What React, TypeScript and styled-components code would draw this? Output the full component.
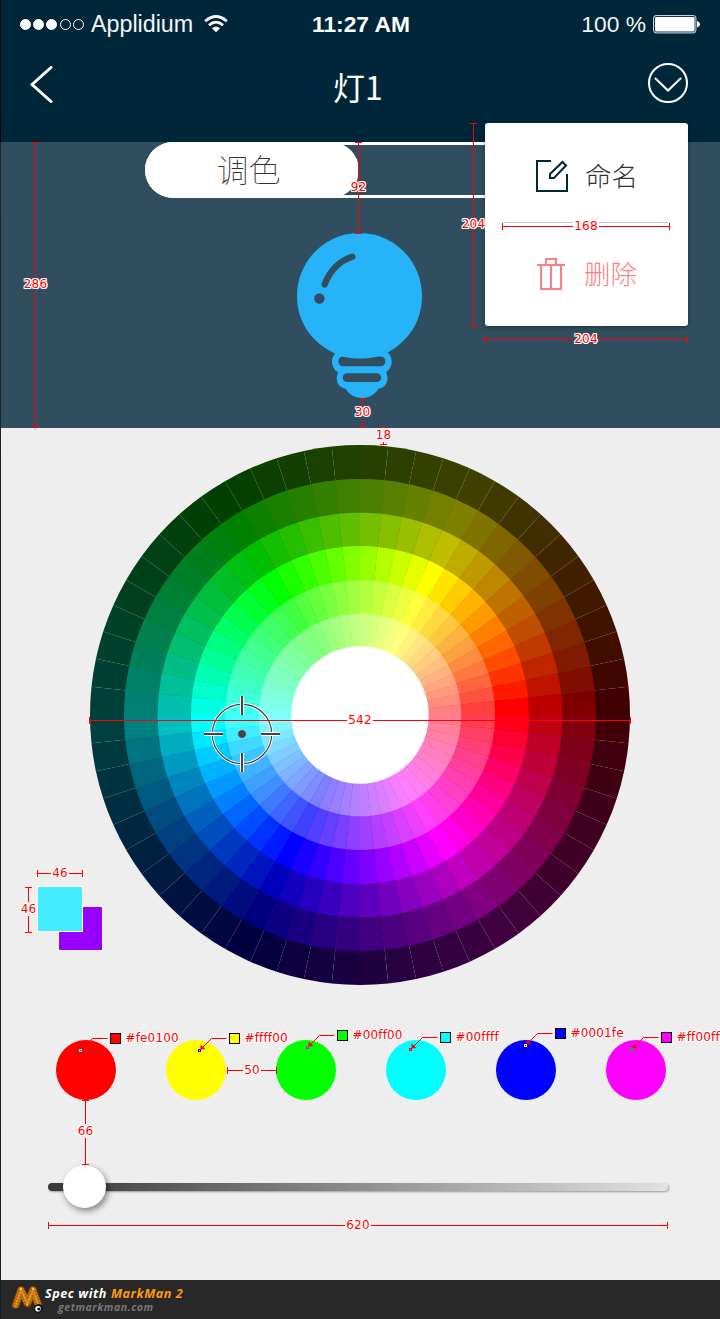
import React from 'react';
import styled, { createGlobalStyle } from 'styled-components';

const RED = '#ff0000';

const GlobalStyle = createGlobalStyle`
  * { box-sizing: border-box; }
  body { margin: 0; background: #eee; }
  svg { display: block; }
`;

const Screen = styled.div`
  position: relative;
  display: flex;
  flex-direction: column;
  width: 720px;
  height: 1319px;
  padding-left: 1px;
  overflow: hidden;
  background: linear-gradient(#000 142px, #1e2626 142px, #16201f);
  font-family: 'Liberation Sans', 'Noto Sans CJK SC', sans-serif;
`;

const Header = styled.header`
  height: 142px;
  background: #00263a;
  color: #fff;
`;

const StatusBar = styled.div`
  display: grid;
  grid-template-columns: 1fr auto 1fr;
  align-items: center;
  height: 48px;
  padding: 0 20px 0 19px;
`;

const Carrier = styled.div`
  display: flex;
  align-items: center;
  gap: 2.2px;
  color: #f2f5f7;
  font-size: 23.3px;
`;

const SignalDot = styled.i<{ $on: boolean }>`
  width: 11px;
  height: 11px;
  border: 1px solid #fff;
  border-radius: 50%;
  background: ${(p) => (p.$on ? '#fff' : 'transparent')};
`;

const CarrierName = styled.span`
  margin: 0 9px 0 5px;
`;

const Clock = styled.strong`
  font-size: 22.8px;
  padding-left: 2px;
`;

const Power = styled.div`
  display: flex;
  align-items: center;
  justify-content: flex-end;
  gap: 7px;
  color: #f2f5f7;
  font-size: 22.8px;
`;

const NavBar = styled.div`
  display: flex;
  align-items: center;
  justify-content: space-between;
  height: 76px;
  padding: 0 31px 0 29px;
`;

const Title = styled.h1`
  margin: -1px 0 0 15px;
  font: 400 32px/40px 'Noto Sans CJK SC', sans-serif;
`;

const MenuToggle = styled.svg`
  overflow: visible;
`;

const LampPanel = styled.section`
  display: flex;
  flex-direction: column;
  align-items: flex-start;
  height: 286px;
  padding-left: 144px;
  background: #304e5f;
`;

const Segmented = styled.div`
  width: 430px;
  height: 56px;
  border-radius: 28px;
  box-shadow: inset 0 0 0 3px #fff;
`;

const Segment = styled.button`
  display: block;
  width: 214px;
  height: 56px;
  padding: 0 7px 4px 0;
  border: 0;
  border-radius: 28px;
  background: #fff;
  color: #333;
  font: 100 32px/52px 'Noto Sans CJK SC', sans-serif;
`;

const BulbSlot = styled.div`
  margin: 34px 0 0 151px;
`;

const Stage = styled.section`
  display: flex;
  align-items: flex-end;
  height: 557px;
  padding-left: 36px;
  background: #eee;
`;

const ChipPair = styled.div`
  position: relative;
  z-index: 1;
  width: 66px;
  height: 65px;
  margin: 0 -13px 34px 0;
`;

const Chip = styled.i<{ $color: string; $x: number; $y: number; $w: number }>`
  position: absolute;
  left: ${(p) => p.$x}px;
  top: ${(p) => p.$y}px;
  width: ${(p) => p.$w}px;
  height: ${(p) => p.$w}px;
  border: 1px solid #fff;
  background: ${(p) => p.$color};
`;

const WheelBox = styled.div`
  position: relative;
`;

const Target = styled.svg`
  position: absolute;
  left: 112px;
  top: 250px;
`;

const Controls = styled.section`
  display: flex;
  flex-direction: column;
  flex: 1;
  background: #eee;
  padding: 55px 0 0 55px;
`;

const Presets = styled.div`
  display: flex;
  gap: 50px;
`;

const Preset = styled.i<{ $color: string }>`
  width: 60px;
  height: 60px;
  border-radius: 50%;
  background: ${(p) => p.$color};
`;

const Slider = styled.div`
  display: flex;
  align-items: center;
  width: 620px;
  height: 8px;
  margin: 83px 0 0 -8px;
  padding-left: 15px;
  border-radius: 4px;
  background: linear-gradient(90deg, #3a3a3a, #e2e2e2);
  box-shadow: 1px 1px 2px rgba(0, 0, 0, 0.35);
`;

const Thumb = styled.i`
  width: 43px;
  height: 43px;
  flex: none;
  margin-top: -2px;
  border-radius: 50%;
  background: #fff;
  box-shadow: 2px 3px 6px rgba(0, 0, 0, 0.45);
`;

const Footer = styled.footer`
  display: flex;
  align-items: center;
  gap: 1px;
  height: 39px;
  padding-left: 10px;
  background: #282828;
  font-family: 'Open Sans', sans-serif;
  font-weight: 700;
  font-style: italic;
`;

const Credit = styled.div`
  display: flex;
  gap: 4px;
  padding-top: 1px;
  color: #fff;
  font-size: 12.6px;
  line-height: 14px;
  letter-spacing: 0.55px;
  white-space: nowrap;
  em { color: #ff9a12; }
`;

const Site = styled.div`
  padding-left: 13px;
  color: #777;
  font-size: 10.6px;
  letter-spacing: 0.5px;
  line-height: 12px;
`;

const Menu = styled.div`
  position: absolute;
  left: 485px;
  top: 123px;
  display: flex;
  flex-direction: column;
  width: 203px;
  height: 203px;
  border-radius: 3px;
  background: #fff;
  box-shadow: 0 1px 4px rgba(0, 0, 0, 0.4);
`;

const MenuItem = styled.div<{ $danger?: boolean }>`
  display: flex;
  align-items: center;
  gap: ${(p) => (p.$danger ? 19 : 17)}px;
  height: ${(p) => (p.$danger ? 101 : 99)}px;
  padding: ${(p) => (p.$danger ? '0 0 0 52px' : '7px 0 0 51px')};
  color: ${(p) => (p.$danger ? '#fc8080' : '#333')};
  font: 300 26.5px/30px 'Noto Sans CJK SC', sans-serif;
`;

const MenuText = styled.span`
  padding-bottom: 2px;
`;

const Divider = styled.i`
  height: 1px;
  margin: 0 20px 0 18px;
  background: #c8c8c8;
`;

const Rule = styled.div<{ $x: number; $y: number; $len: number; $vertical?: boolean }>`
  position: absolute;
  z-index: 2;
  left: ${(p) => p.$x - (p.$vertical ? 3 : 0)}px;
  top: ${(p) => p.$y - (p.$vertical ? 0 : 3)}px;
  width: ${(p) => (p.$vertical ? 7 : p.$len)}px;
  height: ${(p) => (p.$vertical ? p.$len : 7)}px;
  display: flex;
  align-items: center;
  justify-content: center;
  border: 0 solid ${RED};
  border-width: ${(p) => (p.$vertical ? '1px 0' : '0 1px')};
  background: linear-gradient(${RED}, ${RED}) center / ${(p) => (p.$vertical ? '1px 100%' : '100% 1px')} no-repeat;
`;

const Mark = styled.span<{ $bg: string; $dy?: number }>`
  position: relative;
  top: ${(p) => p.$dy ?? 0}px;
  flex: none;
  padding: 0 1px;
  color: ${RED};
  background: ${(p) => p.$bg};
  font: 12px/14px 'DejaVu Sans', sans-serif;
  letter-spacing: 0.2px;
  text-shadow: 1px 0 #fff, -1px 0 #fff, 0 1px #fff, 0 -1px #fff, 1px 1px #fff, -1px -1px #fff, 1px -1px #fff, -1px 1px #fff;
`;

const Callout = styled.div<{ $x: number; $y: number }>`
  position: absolute;
  z-index: 2;
  left: ${(p) => p.$x - 32}px;
  top: ${(p) => p.$y}px;
  display: flex;
  height: 20px;
  white-space: nowrap;
`;

const CalloutBox = styled.i<{ $color: string }>`
  width: 11px;
  height: 11px;
  margin-right: 3.5px;
  border: 1px solid #000;
  background: ${(p) => p.$color};
`;

const CalloutText = styled(Mark)`
  height: 14px;
  top: -2px;
  letter-spacing: 0.15px;
`;

const WHEEL_RINGS = [
  { r: 270, mix: (c: number) => c * 0.25 },
  { r: 236, mix: (c: number) => c * 0.5 },
  { r: 202.3, mix: (c: number) => c * 0.75 },
  { r: 169, mix: (c: number) => c },
  { r: 135, mix: (c: number) => 64 + c * 0.75 },
  { r: 101.2, mix: (c: number) => 128 + c * 0.5 },
];

function hueChannels(h: number) {
  return [5, 3, 1].map((n) => {
    const k = (n + h / 60) % 6;
    return 255 * (1 - Math.max(0, Math.min(k, 4 - k, 1)));
  });
}

function wedge(i: number, r: number) {
  const point = (deg: number) => {
    const a = (deg * Math.PI) / 180;
    return `${(270 + r * Math.cos(a)).toFixed(3)} ${(270 - r * Math.sin(a)).toFixed(3)}`;
  };
  return `M270 270L${point(i * 6)}A${r} ${r} 0 0 0 ${point(i * 6 + 6)}Z`;
}

function ColorWheel() {
  return (
    <svg width="540" height="540">
      {WHEEL_RINGS.map(({ r, mix }) =>
        Array.from({ length: 60 }, (_, i) => (
          <path
            key={`${r}-${i}`}
            d={wedge(i, r)}
            fill={`rgb(${hueChannels(i * 6).map((c) => Math.round(mix(c))).join(',')})`}
          />
        )),
      )}
      <circle cx="270" cy="270" r="68.7" fill="#fff" />
    </svg>
  );
}

function Crosshair() {
  const ticks = 'M40 1V20M40 58V77M2 39H21M59 39H78';
  return (
    <Target width="80" height="78">
      <g fill="none">
        <circle cx="40" cy="39" r="29.7" stroke="#fff" strokeWidth="3" />
        <circle cx="40" cy="39" r="29.7" stroke="#444" strokeWidth="1.2" />
        <path d={ticks} stroke="#fff" strokeWidth="4" />
        <path d={ticks} stroke="#444" strokeWidth="2" />
      </g>
      <circle cx="40" cy="39" r="4.3" fill="#444" stroke="#8ef" strokeWidth=".6" />
    </Target>
  );
}

function Bulb() {
  return (
    <svg width="128" height="167" viewBox="296 232 128 167">
      <g fill="#27b3f8">
        <rect x="332" y="350" width="59.7" height="23.6" rx="11.5" />
        <rect x="336.7" y="367" width="50.8" height="22" rx="10.5" />
        <path d="M344 386H380C376 394 370 398 362 398S348 394 344 386Z" />
      </g>
      <rect x="338.5" y="356.5" width="46.8" height="9.8" rx="4.5" fill="#304e5f" />
      <rect x="342.7" y="373.3" width="38.5" height="8.8" rx="4.4" fill="#304e5f" />
      <path d="M359.5 233C394 233 422 261 422 296C422 323 407 342 387 353C378 357 371 358.5 360 358.5S341 357 334 353C313 343 297 323 297 296C297 261 325 233 359.5 233Z" fill="#27b3f8" />
      <path d="M352.3 256.8Q333 263 324.6 284.5" fill="none" stroke="#304e5f" strokeWidth="6.4" strokeLinecap="round" />
      <circle cx="319.4" cy="298.5" r="5.2" fill="#304e5f" />
    </svg>
  );
}

function WifiIcon() {
  return (
    <svg width="24" height="18" viewBox="0 0 24 18" fill="none" stroke="#fff" strokeWidth="2.7">
      <path d="M1.2 6.2Q12-3.2 22.8 6.2M5 10.2Q12 4 19 10.2" />
      <path d="M8 13.3Q12 9.7 16 13.3L12 17.2Z" fill="#fff" stroke="none" />
    </svg>
  );
}

function BatteryIcon() {
  return (
    <svg width="47" height="19" viewBox="0 0 47 19">
      <rect x=".6" y=".6" width="42.3" height="17.3" rx="2.5" fill="none" stroke="#dfe6ea" />
      <rect x="2" y="2" width="39.6" height="14.5" rx="1" fill="#fff" />
      <path d="M44 6Q47 7 47 9.2T44 12.5Z" fill="#fff" />
    </svg>
  );
}

function EditIcon() {
  return (
    <svg width="32" height="33" viewBox="0 0 32 33" fill="none" stroke="#00263a" strokeWidth="2">
      <path d="M15 1H1V31H31V14" />
      <path d="M14 18V14L26.5 2 30 5.5 18 18Z" />
    </svg>
  );
}

function TrashIcon() {
  return (
    <svg width="28" height="32" viewBox="0 0 28 32" fill="none" stroke="#fc8080" strokeWidth="2">
      <path d="M0 7H28M9 7V1H19V7M4 7V31H24V7M14 7V31" />
    </svg>
  );
}

function CaterpillarLogo() {
  const body = 'M4.8 21L10 6L16.5 19.5L22 6L27 20';
  return (
    <svg width="33" height="31" viewBox="0 0 33 31" fill="none" strokeLinecap="round" strokeLinejoin="round">
      <path d={body} stroke="#6b3806" strokeWidth="8" />
      <path d={body} stroke="#c97612" strokeWidth="6.4" />
      <path d={body} stroke="#8a4c0a" strokeWidth="6.4" strokeDasharray=".6 2.2" strokeLinecap="butt" />
      <path d={body} stroke="#f0a93a" strokeWidth="2" strokeOpacity=".6" />
      <g fill="#ffe08a">
        <circle cx="9.8" cy="5" r="1" />
        <circle cx="16.3" cy="20.5" r="1" />
        <circle cx="22.2" cy="5" r="1" />
      </g>
      <circle cx="27.5" cy="24.5" r="4.6" fill="#181818" />
      <circle cx="27" cy="24.8" r="2.8" fill="#fff" />
      <circle cx="27.8" cy="25" r="1.6" fill="#111" />
    </svg>
  );
}

type DimensionProps = { x: number; y: number; len: number; label: string; vertical?: boolean; bg?: string; dy?: number };

function Dimension({ x, y, len, label, vertical, bg = '#eee', dy }: DimensionProps) {
  return (
    <Rule $x={x} $y={y} $len={len} $vertical={vertical}>
      <Mark $bg={bg} $dy={dy}>{label}</Mark>
    </Rule>
  );
}

const PRESETS = [
  { hex: '#fe0100', inverse: '#00ffff', x: 110, y: 1033 },
  { hex: '#ffff00', inverse: '#0000ff', x: 229, y: 1033 },
  { hex: '#00ff00', inverse: '#ff00ff', x: 337, y: 1030 },
  { hex: '#00ffff', inverse: '#ff0000', x: 440, y: 1032 },
  { hex: '#0001fe', inverse: '#ffff00', x: 555, y: 1028 },
  { hex: '#ff00ff', inverse: '#00c000', x: 661, y: 1032 },
];

const DIMENSIONS: DimensionProps[] = [
  { x: 35, y: 142, len: 286, label: '286', vertical: true, bg: '#304e5f', dy: -1 },
  { x: 358, y: 142, len: 92, label: '92', vertical: true, bg: 'transparent', dy: -1 },
  { x: 362, y: 398, len: 30, label: '30', vertical: true, bg: '#304e5f', dy: -1 },
  { x: 473, y: 123, len: 204, label: '204', vertical: true, bg: 'transparent', dy: -1 },
  { x: 502, y: 226, len: 168, label: '168', bg: '#fff', dy: -1 },
  { x: 484, y: 339, len: 204, label: '204', bg: '#304e5f', dy: -1 },
  { x: 89, y: 720, len: 542, label: '542', bg: '#fff', dy: -1 },
  { x: 37, y: 873, len: 46, label: '46', dy: -1 },
  { x: 28, y: 887, len: 46, label: '46', vertical: true, dy: -1 },
  { x: 227, y: 1070, len: 50, label: '50', dy: -1 },
  { x: 85, y: 1100, len: 65, label: '66', vertical: true, dy: -2 },
  { x: 48, y: 1225, len: 620, label: '620', dy: -1 },
  { x: 383, y: 427, len: 18, label: '18', vertical: true, dy: -1 },
];

export default function App() {
  return (
    <Screen>
      <GlobalStyle />
      <Header>
        <StatusBar>
          <Carrier>
            {[1, 2, 3, 4, 5].map((n) => <SignalDot key={n} $on={n < 4} />)}
            <CarrierName>Applidium</CarrierName>
            <WifiIcon />
          </Carrier>
          <Clock>11:27 AM</Clock>
          <Power><span>100 %</span><BatteryIcon /></Power>
        </StatusBar>
        <NavBar>
          <svg width="24" height="40" viewBox="0 0 24 40" fill="none" stroke="#fff" strokeWidth="3" strokeLinecap="round" strokeLinejoin="round">
            <path d="M21 1.5L2 18.5 21 35.5" />
          </svg>
          <Title>灯1</Title>
          <MenuToggle width="42" height="44" viewBox="0 0 42 44" fill="none" stroke="#fff" strokeWidth="2" strokeLinecap="round">
            <circle cx="21" cy="19" r="19" />
            <path d="M8.5 14.5L21 26.5 33.5 14.5" />
          </MenuToggle>
        </NavBar>
      </Header>

      <LampPanel>
        <Segmented><Segment>调色</Segment></Segmented>
        <BulbSlot><Bulb /></BulbSlot>
      </LampPanel>

      <Stage>
        <ChipPair>
          <Chip $color="#9800ff" $x={21} $y={20} $w={45} />
          <Chip $color="#43edff" $x={0} $y={0} $w={46} />
        </ChipPair>
        <WheelBox>
          <ColorWheel />
          <Crosshair />
        </WheelBox>
      </Stage>

      <Controls>
        <Presets>{PRESETS.map((p) => <Preset key={p.hex} $color={p.hex} />)}</Presets>
        <Slider><Thumb /></Slider>
      </Controls>

      <Footer>
        <CaterpillarLogo />
        <div>
          <Credit><span>Spec with</span><em>MarkMan 2</em></Credit>
          <Site>getmarkman.com</Site>
        </div>
      </Footer>

      <Menu>
        <MenuItem><EditIcon /><MenuText>命名</MenuText></MenuItem>
        <Divider />
        <MenuItem $danger><TrashIcon /><MenuText>删除</MenuText></MenuItem>
      </Menu>

      {DIMENSIONS.map((d) => <Dimension key={`${d.x}-${d.y}`} {...d} />)}

      {PRESETS.map((p) => (
        <Callout key={p.hex} $x={p.x} $y={p.y}>
          <svg width="32" height="20" viewBox="0 0 32 20" fill="none">
            <path d="M29.5 5.5H14.5L5 15" stroke={RED} />
            <path d="M3.5 16.5V11.5L8.5 16Z" fill={RED} />
            <rect x="1.5" y="16.5" width="2" height="2" stroke={p.inverse} />
          </svg>
          <CalloutBox $color={p.hex} />
          <CalloutText $bg="transparent">{p.hex}</CalloutText>
        </Callout>
      ))}
    </Screen>
  );
}
